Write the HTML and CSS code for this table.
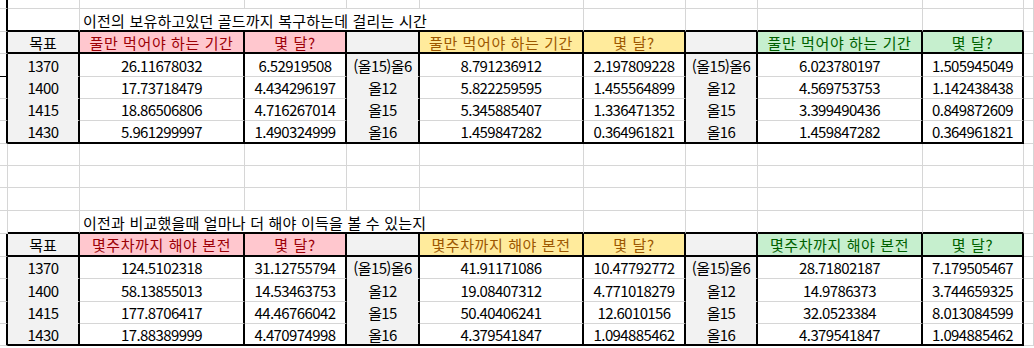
FILE: index.html
```html
<!DOCTYPE html>
<html lang="ko">
<head>
<meta charset="utf-8">
<title>골드 복구 시간</title>
<link rel="stylesheet" href="styles.css">
</head>
<body>
<div class="sheet">
  <!-- row 0 (partial) -->
  <div class="c lb"></div><div class="c"></div><div class="c"></div><div class="c"></div><div class="c"></div><div class="c"></div><div class="c"></div><div class="c"></div><div class="c"></div><div class="c"></div><div class="c"></div>

  <!-- title 1 -->
  <div class="c lb"></div>
  <div class="c hb"></div>
  <div class="c hb ttl span4">이전의 보유하고있던 골드까지 복구하는데 걸리는 시간</div>
  <div class="c hb"></div><div class="c hb"></div><div class="c hb"></div><div class="c hb"></div>
  <div class="c"></div>

  <!-- header 1 -->
  <div class="c lb"></div>
  <div class="c g vb hb">목표</div>
  <div class="c pk vb hb hd">풀만 먹어야 하는 기간</div>
  <div class="c pk vb hb hd">몇 달?</div>
  <div class="c g vb hb"></div>
  <div class="c ye vb hb hd">풀만 먹어야 하는 기간</div>
  <div class="c ye vb hb hd">몇 달?</div>
  <div class="c g vb hb"></div>
  <div class="c gr vb hb hd">풀만 먹어야 하는 기간</div>
  <div class="c gr vb hb hd">몇 달?</div>
  <div class="c"></div>

  <!-- data 1 -->
  <div class="c lb tk"></div>
  <div class="c g vb num">1370</div>
  <div class="c vb num">26.11678032</div>
  <div class="c vb num">6.52919508</div>
  <div class="c g vb num">(올15)올6</div>
  <div class="c vb num">8.791236912</div>
  <div class="c vb num">2.197809228</div>
  <div class="c g vb num">(올15)올6</div>
  <div class="c vb num">6.023780197</div>
  <div class="c vb num">1.505945049</div>
  <div class="c"></div>

  <div class="c lb"></div>
  <div class="c g vb num">1400</div>
  <div class="c vb num">17.73718479</div>
  <div class="c vb num">4.434296197</div>
  <div class="c g vb num">올12</div>
  <div class="c vb num">5.822259595</div>
  <div class="c vb num">1.455564899</div>
  <div class="c g vb num">올12</div>
  <div class="c vb num">4.569753753</div>
  <div class="c vb num">1.142438438</div>
  <div class="c"></div>

  <div class="c lb"></div>
  <div class="c g vb num">1415</div>
  <div class="c vb num">18.86506806</div>
  <div class="c vb num">4.716267014</div>
  <div class="c g vb num">올15</div>
  <div class="c vb num">5.345885407</div>
  <div class="c vb num">1.336471352</div>
  <div class="c g vb num">올15</div>
  <div class="c vb num">3.399490436</div>
  <div class="c vb num">0.849872609</div>
  <div class="c"></div>

  <div class="c lb"></div>
  <div class="c g vb hb num">1430</div>
  <div class="c vb hb num">5.961299997</div>
  <div class="c vb hb num">1.490324999</div>
  <div class="c g vb hb num">올16</div>
  <div class="c vb hb num">1.459847282</div>
  <div class="c vb hb num">0.364961821</div>
  <div class="c g vb hb num">올16</div>
  <div class="c vb hb num">1.459847282</div>
  <div class="c vb hb num">0.364961821</div>
  <div class="c"></div>

  <!-- blank rows -->
  <div class="c"></div><div class="c"></div><div class="c"></div><div class="c"></div><div class="c"></div><div class="c"></div><div class="c"></div><div class="c"></div><div class="c"></div><div class="c"></div><div class="c"></div>
  <div class="c"></div><div class="c"></div><div class="c"></div><div class="c"></div><div class="c"></div><div class="c"></div><div class="c"></div><div class="c"></div><div class="c"></div><div class="c"></div><div class="c"></div>
  <div class="c"></div><div class="c"></div><div class="c"></div><div class="c"></div><div class="c"></div><div class="c"></div><div class="c"></div><div class="c"></div><div class="c"></div><div class="c"></div><div class="c"></div>

  <!-- title 2 -->
  <div class="c"></div>
  <div class="c hb"></div>
  <div class="c hb ttl span4">이전과 비교했을때 얼마나 더 해야 이득을 볼 수 있는지</div>
  <div class="c hb"></div><div class="c hb"></div><div class="c hb"></div><div class="c hb"></div>
  <div class="c"></div>

  <!-- header 2 -->
  <div class="c lb"></div>
  <div class="c g vb hb">목표</div>
  <div class="c pk vb hb hd">몇주차까지 해야 본전</div>
  <div class="c pk vb hb hd">몇 달?</div>
  <div class="c g vb hb"></div>
  <div class="c ye vb hb hd">몇주차까지 해야 본전</div>
  <div class="c ye vb hb hd">몇 달?</div>
  <div class="c g vb hb"></div>
  <div class="c gr vb hb hd">몇주차까지 해야 본전</div>
  <div class="c gr vb hb hd">몇 달?</div>
  <div class="c"></div>

  <!-- data 2 -->
  <div class="c lb"></div>
  <div class="c g vb num">1370</div>
  <div class="c vb num">124.5102318</div>
  <div class="c vb num">31.12755794</div>
  <div class="c g vb num">(올15)올6</div>
  <div class="c vb num">41.91171086</div>
  <div class="c vb num">10.47792772</div>
  <div class="c g vb num">(올15)올6</div>
  <div class="c vb num">28.71802187</div>
  <div class="c vb num">7.179505467</div>
  <div class="c"></div>

  <div class="c lb"></div>
  <div class="c g vb num">1400</div>
  <div class="c vb num">58.13855013</div>
  <div class="c vb num">14.53463753</div>
  <div class="c g vb num">올12</div>
  <div class="c vb num">19.08407312</div>
  <div class="c vb num">4.771018279</div>
  <div class="c g vb num">올12</div>
  <div class="c vb num">14.9786373</div>
  <div class="c vb num">3.744659325</div>
  <div class="c"></div>

  <div class="c lb"></div>
  <div class="c g vb num">1415</div>
  <div class="c vb num">177.8706417</div>
  <div class="c vb num">44.46766042</div>
  <div class="c g vb num">올15</div>
  <div class="c vb num">50.40406241</div>
  <div class="c vb num">12.6010156</div>
  <div class="c g vb num">올15</div>
  <div class="c vb num">32.0523384</div>
  <div class="c vb num">8.013084599</div>
  <div class="c"></div>

  <div class="c lb"></div>
  <div class="c g vb hb num">1430</div>
  <div class="c vb hb num">17.88389999</div>
  <div class="c vb hb num">4.470974998</div>
  <div class="c g vb hb num">올16</div>
  <div class="c vb hb num">4.379541847</div>
  <div class="c vb hb num">1.094885462</div>
  <div class="c g vb hb num">올16</div>
  <div class="c vb hb num">4.379541847</div>
  <div class="c vb hb num">1.094885462</div>
  <div class="c"></div>
</div>
</body>
</html>
```
FILE: styles.css
```css
html, body {
  margin: 0;
  padding: 0;
  background: #ffffff;
}

body {
  font-family: "Noto Sans CJK KR", "Noto Sans", sans-serif;
  font-size: 15px;
  color: #000000;
}

.sheet {
  display: grid;
  width: 1034px;
  height: 348px;
  overflow: hidden;
  grid-template-columns: 8px 72px 165px 102px 73px 164px 102px 72px 165px 101px 1fr;
  grid-template-rows: 9px 23px 22px 23px 22px 22px 23px 22px 22px 23px 23px 23px 22px 23px 22px 22px 2px;
}

.c {
  box-sizing: border-box;
  border-right: 1px solid #d6d6d6;
  border-bottom: 1px solid #d6d6d6;
  display: flex;
  align-items: center;
  justify-content: center;
  white-space: nowrap;
  line-height: 1;
  min-width: 0;
}

.span4 {
  grid-column: span 4;
}

.ttl {
  justify-content: flex-start;
  padding-left: 3px;
  padding-top: 2px;
  letter-spacing: 0.2px;
}

.hd {
  letter-spacing: 0.6px;
}

.num {
  letter-spacing: -0.6px;
}

.g {
  background: #f2f2f2;
  border-bottom-color: #f2f2f2;
}

.pk {
  background: #ffc7ce;
  color: #9c0006;
}

.ye {
  background: #ffeb9c;
  color: #9c5700;
}

.gr {
  background: #c6efce;
  color: #006100;
}

.lb {
  border-right: 2px solid #000000;
}

.tk {
  border-bottom: 1px solid #000000;
}

.vb {
  border-right: 2px solid #000000;
}

.hb {
  border-bottom: 2px solid #000000;
}
```
